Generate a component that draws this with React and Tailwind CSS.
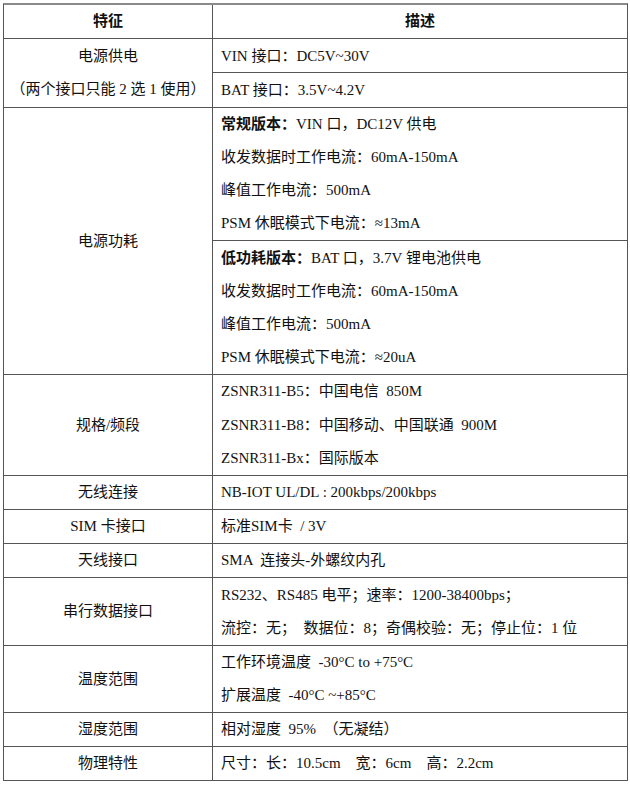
import React from 'react';

const font = { fontFamily: '"Liberation Serif", "Noto Sans CJK SC", serif' };

const rows = [
    {
        left: ['电源供电', '（两个接口只能 2 选 1 使用）'],
        right: [['VIN 接口：DC5V~30V'], ['BAT 接口：3.5V~4.2V']],
    },
    {
        left: ['电源功耗'],
        right: [
            [
                <><b className="font-bold">常规版本：</b>VIN 口，DC12V 供电</>,
                '收发数据时工作电流：60mA-150mA',
                '峰值工作电流：500mA',
                'PSM 休眠模式下电流：≈13mA',
            ],
            [
                <><b className="font-bold">低功耗版本：</b>BAT 口，3.7V 锂电池供电</>,
                '收发数据时工作电流：60mA-150mA',
                '峰值工作电流：500mA',
                'PSM 休眠模式下电流：≈20uA',
            ],
        ],
        thick: true,
    },
    {
        left: ['规格/频段'],
        right: [['ZSNR311-B5：中国电信  850M', 'ZSNR311-B8：中国移动、中国联通  900M', 'ZSNR311-Bx：国际版本']],
        thick: true,
    },
    { left: ['无线连接'], right: [['NB-IOT UL/DL : 200kbps/200kbps']], thick: true },
    { left: ['SIM 卡接口'], right: [['标准SIM卡  / 3V']], thick: true },
    { left: ['天线接口'], right: [['SMA  连接头-外螺纹内孔']] },
    {
        left: ['串行数据接口'],
        right: [['RS232、RS485 电平；速率：1200-38400bps；', '流控：无；  数据位：8；奇偶校验：无；停止位：1 位']],
        thick: true,
    },
    { left: ['温度范围'], right: [['工作环境温度  -30°C to +75°C', '扩展温度  -40°C ~+85°C']], thick: true },
    { left: ['湿度范围'], right: [['相对湿度  95%  （无凝结）']] },
    { left: ['物理特性'], right: [['尺寸：长：10.5cm    宽：6cm    高：2.2cm']] },
];

const Line = ({ children, center }) => (
    <div className={`h-[33.2px] flex items-center whitespace-pre ${center ? 'justify-center' : ''}`}>{children}</div>
);

const App = () => {
    return (
        <div className="min-h-[785px] bg-white pt-[3px] text-[15px] text-[#111]" style={font}>
            <div className="ml-[3px] w-[625px] border-l border-r border-t-2 border-[#555] border-t-[#8a8a8a]">
                {/* Header */}
                <div className="flex border-b border-[#555]">
                    <div className="w-[209px] border-r border-[#555] font-bold">
                        <Line center>特征</Line>
                    </div>
                    <div className="flex-1 font-bold">
                        <Line center>描述</Line>
                    </div>
                </div>

                {rows.map((row, i) => (
                    <div key={i} className={`flex border-b border-[#555] ${i === rows.length - 1 ? '' : ''}`}>
                        <div className="w-[209px] border-r border-[#555] flex flex-col justify-center">
                            {row.left.map((t, j) => (
                                <Line key={j} center>{t}</Line>
                            ))}
                        </div>
                        <div className="flex-1 flex flex-col">
                            {row.right.map((block, j) => (
                                <div key={j} className={`pl-2 ${j > 0 ? 'border-t border-[#555]' : ''}`}>
                                    {block.map((t, k) => (
                                        <Line key={k}>{t}</Line>
                                    ))}
                                </div>
                            ))}
                        </div>
                    </div>
                ))}
            </div>
        </div>
    );
};

export default App;
